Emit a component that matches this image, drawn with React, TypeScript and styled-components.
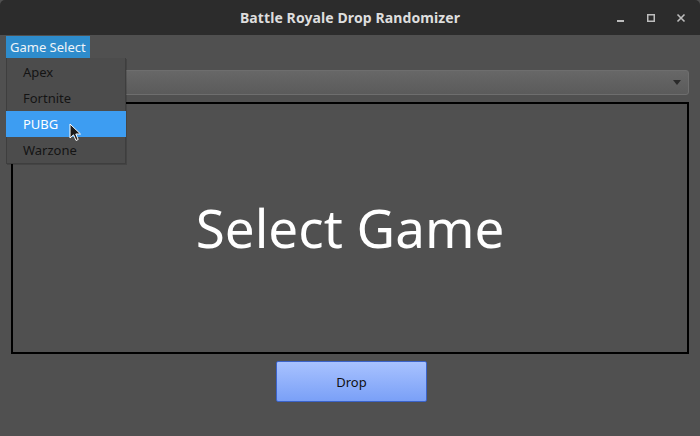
import React from "react";
import styled, { createGlobalStyle } from "styled-components";

const Global = createGlobalStyle`
  html, body { margin: 0; padding: 0; background: #505050; }
  body { width: 700px; height: 436px; overflow: hidden; font-family: "Noto Sans", "Open Sans", sans-serif; }
`;

const Window = styled.div`
  position: relative;
  width: 700px;
  height: 436px;
  background: #505050;
  display: flex;
  flex-direction: column;
`;

const TitleBar = styled.div`
  height: 35px;
  flex: none;
  background: #2c2c2c;
  border-radius: 5px 5px 0 0;
  display: flex;
  align-items: center;
  justify-content: center;
  position: relative;
`;

const Title = styled.div`
  color: #dedede;
  font-family: "Noto Sans", "Open Sans", sans-serif;
  font-weight: 700;
  font-size: 14px;
  letter-spacing: 0.1px;
`;

const Controls = styled.div`
  position: absolute;
  right: 10px;
  top: 0;
  height: 35px;
  display: flex;
  align-items: center;
  gap: 12px;
`;

const CtrlBtn = styled.div`
  width: 18px;
  height: 18px;
  display: flex;
  align-items: center;
  justify-content: center;
`;

const MenuBar = styled.div`
  height: 23px;
  flex: none;
  display: flex;
  align-items: flex-start;
  padding: 1px 0 0 6px;
  box-sizing: border-box;
`;

const MenuTitle = styled.div`
  height: 22px;
  padding: 0 4px;
  background: #2e8ccc;
  color: #eef4f8;
  font-size: 13px;
  line-height: 22px;
`;

const Content = styled.div`
  flex: 1;
  display: flex;
  flex-direction: column;
  align-items: stretch;
  padding: 12px 11px 0 11px;
  gap: 7px;
`;

const Combo = styled.div`
  height: 25px;
  box-sizing: border-box;
  border: 1px solid #6e6e6e;
  border-radius: 3px;
  background: linear-gradient(#676767, #5b5b5b);
  display: flex;
  align-items: center;
  justify-content: flex-end;
  padding-right: 7px;
`;

const Frame = styled.div`
  height: 252px;
  box-sizing: border-box;
  border: 2px solid #000;
  display: flex;
  align-items: center;
  justify-content: center;
`;

const BigText = styled.div`
  color: #ffffff;
  font-family: "Noto Sans", "Open Sans", sans-serif;
  font-size: 53px;
  line-height: 1;
  margin-top: -1px;
`;

const ButtonRow = styled.div`
  display: flex;
  justify-content: center;
`;

const DropButton = styled.button`
  width: 151px;
  height: 41px;
  margin-left: 3px;
  margin-top: 0px;
  box-sizing: border-box;
  border: 1px solid #3b63c9;
  border-radius: 2px;
  background: linear-gradient(#a8c2ff, #7aa0f7);
  color: #111;
  font-family: "Noto Sans", "Open Sans", sans-serif;
  font-size: 13px;
  padding: 0;
`;

const Menu = styled.div`
  position: absolute;
  left: 6px;
  top: 58px;
  width: 120px;
  box-sizing: border-box;
  background: #4c4c4c;
  border: 1px solid #3e3e3e;
  border-top: none;
  box-shadow: 1px 1px 0 rgba(0,0,0,0.15);
  display: flex;
  flex-direction: column;
  padding-top: 1px;
`;

const MenuItem = styled.div<{ $active?: boolean }>`
  height: 26px;
  line-height: 26px;
  font-size: 13px;
  color: ${(p) => (p.$active ? "#ffffff" : "#141414")};
  background: ${(p) => (p.$active ? "#3d9df2" : "transparent")};
  margin: 0 -1px 0 -1px;
  padding-left: 17px;
`;

const Cursor = styled.svg`
  position: absolute;
  left: 69px;
  top: 123px;
`;

export default function App() {
  return (
    <>
      <Global />
      <Window>
        <TitleBar>
          <Title>Battle Royale Drop Randomizer</Title>
          <Controls>
            <CtrlBtn>
              <svg width="10" height="10" viewBox="0 0 10 10">
                <rect x="1" y="7" width="7" height="2" fill="#bdbdbd" />
              </svg>
            </CtrlBtn>
            <CtrlBtn>
              <svg width="10" height="10" viewBox="0 0 10 10">
                <rect x="1.75" y="1.75" width="6.5" height="6.5" fill="none" stroke="#bdbdbd" strokeWidth="1.5" />
              </svg>
            </CtrlBtn>
            <CtrlBtn>
              <svg width="10" height="10" viewBox="0 0 10 10">
                <path d="M1.5 1.5 L8.5 8.5 M8.5 1.5 L1.5 8.5" stroke="#bdbdbd" strokeWidth="1.6" />
              </svg>
            </CtrlBtn>
          </Controls>
        </TitleBar>
        <MenuBar>
          <MenuTitle>Game Select</MenuTitle>
        </MenuBar>
        <Content>
          <Combo>
            <svg width="8" height="5" viewBox="0 0 8 5">
              <path d="M0 0 L8 0 L4 5 Z" fill="#2a2a2a" />
            </svg>
          </Combo>
          <Frame>
            <BigText>Select Game</BigText>
          </Frame>
          <ButtonRow>
            <DropButton>Drop</DropButton>
          </ButtonRow>
        </Content>
        <Menu>
          <MenuItem>Apex</MenuItem>
          <MenuItem>Fortnite</MenuItem>
          <MenuItem $active>PUBG</MenuItem>
          <MenuItem>Warzone</MenuItem>
        </Menu>
        <Cursor width="14" height="20" viewBox="0 0 14 20">
          <path d="M1 1 L1 15 L4.5 11.8 L7 17.5 L9.2 16.5 L6.8 11 L11.5 11 Z" fill="#1a1a1a" stroke="#ffffff" strokeWidth="1" strokeLinejoin="round" />
        </Cursor>
      </Window>
    </>
  );
}
